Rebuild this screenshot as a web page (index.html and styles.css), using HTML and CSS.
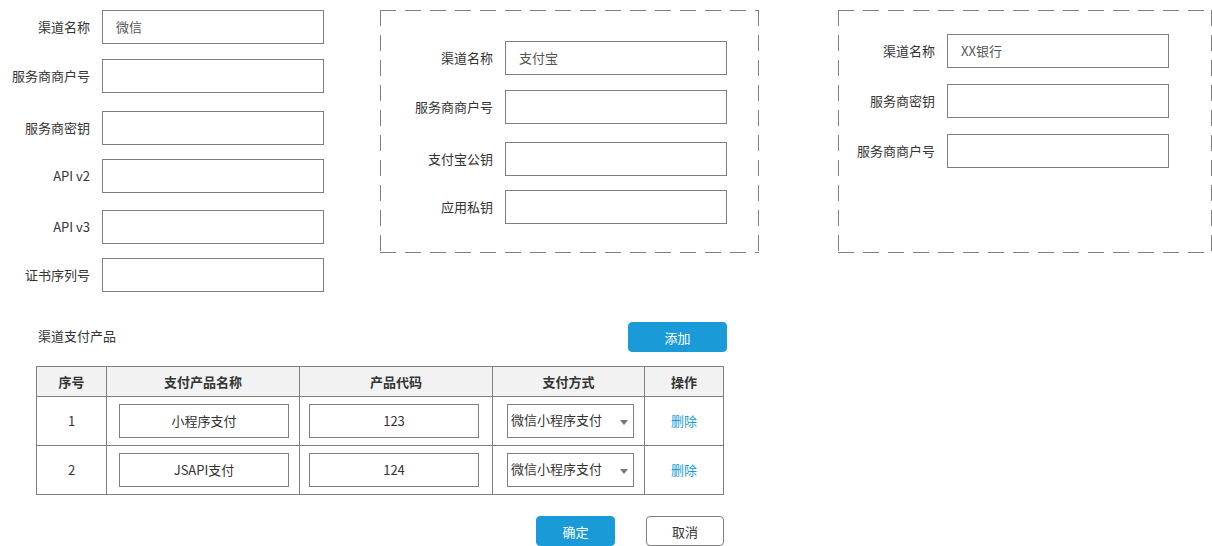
FILE: index.html
```html
<!DOCTYPE html>
<html lang="zh-CN">
<head>
<meta charset="utf-8">
<title>渠道配置</title>
<link rel="stylesheet" href="styles.css">
</head>
<body>
<div class="page">
  <div class="top">
    <div class="form-left">
      <div class="field"><label>渠道名称</label><div class="input">微信</div></div>
      <div class="field mt15"><label>服务商商户号</label><div class="input"></div></div>
      <div class="field mt18"><label>服务商密钥</label><div class="input"></div></div>
      <div class="field mt14"><label>API v2</label><div class="input"></div></div>
      <div class="field mt17"><label>API v3</label><div class="input"></div></div>
      <div class="field mt14"><label>证书序列号</label><div class="input"></div></div>
    </div>
    <div class="box box-alipay">
      <div class="field"><label>渠道名称</label><div class="input">支付宝</div></div>
      <div class="field mt15"><label>服务商商户号</label><div class="input"></div></div>
      <div class="field mt18"><label>支付宝公钥</label><div class="input"></div></div>
      <div class="field mt14"><label>应用私钥</label><div class="input"></div></div>
    </div>
    <div class="box box-bank">
      <div class="field"><label>渠道名称</label><div class="input">XX银行</div></div>
      <div class="field mt16"><label>服务商密钥</label><div class="input"></div></div>
      <div class="field mt16"><label>服务商商户号</label><div class="input"></div></div>
    </div>
  </div>

  <div class="products">
    <div class="products-head">
      <span class="products-title">渠道支付产品</span>
      <button class="btn btn-primary btn-add">添加</button>
    </div>
    <table class="ptable">
      <colgroup>
        <col class="c1"><col class="c2"><col class="c3"><col class="c4"><col class="c5">
      </colgroup>
      <thead>
        <tr class="head-row"><th>序号</th><th>支付产品名称</th><th>产品代码</th><th>支付方式</th><th>操作</th></tr>
      </thead>
      <tbody>
        <tr class="body-row">
          <td>1</td>
          <td><div class="cell-input name-input">小程序支付</div></td>
          <td><div class="cell-input code-input">123</div></td>
          <td><div class="select"><span>微信小程序支付</span><i class="caret"></i></div></td>
          <td><span class="link">删除</span></td>
        </tr>
        <tr class="body-row">
          <td>2</td>
          <td><div class="cell-input name-input">JSAPI支付</div></td>
          <td><div class="cell-input code-input">124</div></td>
          <td><div class="select"><span>微信小程序支付</span><i class="caret"></i></div></td>
          <td><span class="link">删除</span></td>
        </tr>
      </tbody>
    </table>
    <div class="actions">
      <button class="btn btn-primary btn-ok">确定</button>
      <button class="btn btn-default btn-cancel">取消</button>
    </div>
  </div>
</div>
</body>
</html>
```

FILE: styles.css
```css
html, body {
  margin: 0;
  padding: 0;
  background: #fff;
}
body {
  font-family: "Noto Sans CJK SC", "Liberation Sans", sans-serif;
  font-size: 13px;
  color: #333;
  line-height: 1.2;
}
.page {
  padding-top: 10px;
}
.top {
  display: flex;
  align-items: flex-start;
}
.form-left {
  width: 324px;
}
.field {
  display: flex;
  align-items: center;
}
.field label {
  width: 90px;
  margin-right: 12px;
  text-align: right;
  white-space: nowrap;
  color: #333;
}
.input {
  box-sizing: border-box;
  width: 222px;
  height: 34px;
  border: 1px solid #7f7f7f;
  padding-left: 13px;
  display: flex;
  align-items: center;
  color: #555;
}
.mt14 { margin-top: 14px; }
.mt15 { margin-top: 15px; }
.mt16 { margin-top: 16px; }
.mt17 { margin-top: 17px; }
.mt18 { margin-top: 18px; }

.box {
  box-sizing: border-box;
  height: 243px;
  background:
    repeating-linear-gradient(90deg, #7f7f7f 0 16px, transparent 16px 25px) left top / 100% 1px no-repeat,
    repeating-linear-gradient(90deg, #7f7f7f 0 16px, transparent 16px 25px) left bottom / 100% 1px no-repeat,
    repeating-linear-gradient(180deg, #7f7f7f 0 16px, transparent 16px 25px) left top / 1px 100% no-repeat,
    repeating-linear-gradient(180deg, #7f7f7f 0 16px, transparent 16px 25px) right top / 1px 100% no-repeat;
}
.box-alipay {
  width: 379px;
  margin-left: 56px;
  padding: 31px 0 0 13px;
}
.box-alipay .field label {
  width: 100px;
}
.box-bank {
  width: 374px;
  margin-left: 79px;
  padding: 24px 0 0 7px;
}

.products {
  margin-top: 30px;
  margin-left: 36px;
  width: 691px;
}
.products-head {
  display: flex;
  align-items: center;
  justify-content: space-between;
}
.products-title {
  padding-left: 2px;
  margin-top: -3px;
}
.btn {
  box-sizing: border-box;
  font-family: inherit;
  font-size: 13px;
  height: 30px;
  border-radius: 4px;
  padding: 0;
  cursor: pointer;
}
.btn-primary {
  background: #1a9bd7;
  border: 1px solid #1a9bd7;
  color: #fff;
}
.btn-default {
  background: #fff;
  border: 1px solid #7f7f7f;
  color: #333;
}
.btn-add {
  width: 99px;
}
.ptable {
  margin-top: 14px;
  width: 688px;
  border-collapse: collapse;
  table-layout: fixed;
}
.c1 { width: 70px; }
.c2 { width: 193px; }
.c3 { width: 193px; }
.c4 { width: 152px; }
.c5 { width: 79px; }
.ptable th, .ptable td {
  border: 1px solid #7f7f7f;
  text-align: center;
  padding: 0;
}
.ptable th {
  height: 29px;
  background: #f2f2f2;
  font-weight: bold;
  color: #333;
}
.ptable td {
  height: 48px;
}
.cell-input {
  box-sizing: border-box;
  width: 170px;
  height: 34px;
  border: 1px solid #7f7f7f;
  display: flex;
  align-items: center;
  justify-content: center;
  color: #333;
}
.name-input {
  margin-left: 12px;
}
.code-input {
  margin-left: 9px;
}
.select {
  box-sizing: border-box;
  width: 127px;
  height: 34px;
  margin-left: 14px;
  border: 1px solid #7f7f7f;
  display: flex;
  align-items: center;
  justify-content: space-between;
  padding: 0 5px 0 3px;
  color: #333;
}
.select span {
  margin-top: -2px;
}
.caret {
  width: 0;
  height: 0;
  border-left: 4px solid transparent;
  border-right: 4px solid transparent;
  border-top: 5px solid #777;
  margin-top: 2px;
}
.link {
  color: #1a9bd7;
}
.actions {
  display: flex;
  justify-content: flex-end;
  gap: 31px;
  width: 688px;
  margin-top: 21px;
}
.btn-ok {
  width: 79px;
}
.btn-cancel {
  width: 78px;
}
```
